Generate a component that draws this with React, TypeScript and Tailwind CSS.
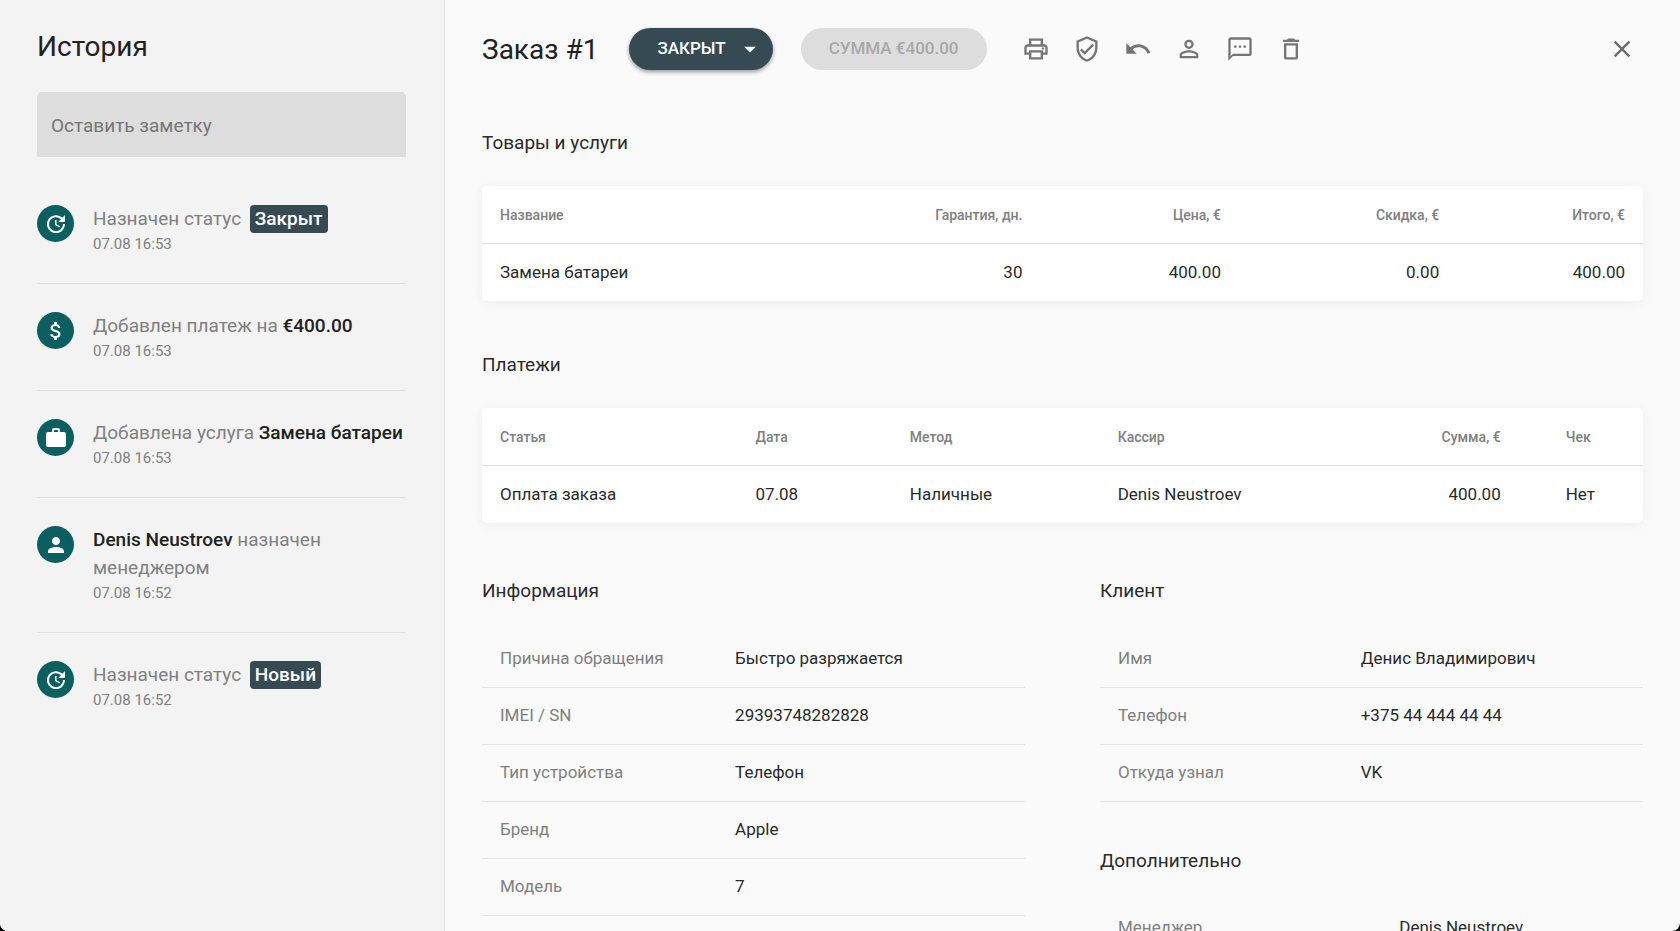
import type { ReactNode } from "react";
import type { IconType } from "react-icons";
import {
  MdArrowDropDown,
  MdAttachMoney,
  MdClose,
  MdDeleteOutline,
  MdOutlinePrint,
  MdOutlineTextsms,
  MdOutlineVerifiedUser,
  MdPerson,
  MdPersonOutline,
  MdUndo,
  MdUpdate,
  MdWork,
} from "react-icons/md";

const actions: { label: string; icon: IconType }[] = [
  { label: "Печать", icon: MdOutlinePrint },
  { label: "Гарантия", icon: MdOutlineVerifiedUser },
  { label: "Вернуть", icon: MdUndo },
  { label: "Менеджер", icon: MdPersonOutline },
  { label: "Сообщение", icon: MdOutlineTextsms },
  { label: "Удалить", icon: MdDeleteOutline },
];

const info = [
  ["Причина обращения", "Быстро разряжается"],
  ["IMEI / SN", "29393748282828"],
  ["Тип устройства", "Телефон"],
  ["Бренд", "Apple"],
  ["Модель", "7"],
];

const client = [
  ["Имя", "Денис Владимирович"],
  ["Телефон", "+375 44 444 44 44"],
  ["Откуда узнал", "VK"],
];

const extra = [["Менеджер", "Denis Neustroev"]];

function Badge({ children }: { children: ReactNode }) {
  return (
    <span className="ml-1 inline-block rounded bg-[#364a54] px-[5px] font-medium text-white">
      {children}
    </span>
  );
}

function Strong({ children }: { children: ReactNode }) {
  return <span className="font-medium text-[#212121]">{children}</span>;
}

function HistoryItem({ icon: Icon, time, children }: { icon: IconType; time: string; children: ReactNode }) {
  return (
    <li className="flex gap-[19px] border-b border-[#e2e2e2] py-7 last:border-b-0">
      <span className="flex size-[37px] shrink-0 items-center justify-center rounded-full bg-[#0b5f61] text-white">
        <Icon size={24} />
      </span>
      <div className="min-w-0 flex-1">
        <p className="text-[19px] leading-7 text-[#808080]">{children}</p>
        <time className="block text-[15px] leading-[22px] text-[#808080]">{time}</time>
      </div>
    </li>
  );
}

function SectionTitle({ children }: { children: ReactNode }) {
  return <h2 className="text-[19px] leading-[30px] text-[#2a2a2a]">{children}</h2>;
}

function Card({ children }: { children: ReactNode }) {
  return (
    <div className="mt-7 overflow-hidden rounded-[5px] bg-white shadow-[0_2px_12px_rgba(0,0,0,0.06)]">
      {children}
    </div>
  );
}

function Th({ className = "", children }: { className?: string; children: ReactNode }) {
  return (
    <th className={`h-[58px] border-b border-[#e0e0e0] px-[18px] text-sm font-medium text-[#808080] ${className}`}>
      {children}
    </th>
  );
}

function Td({ className = "", children }: { className?: string; children: ReactNode }) {
  return <td className={`h-[57px] px-[18px] text-[17px] text-[#2a2a2a] ${className}`}>{children}</td>;
}

function Details({ rows, labelWidth }: { rows: string[][]; labelWidth: string }) {
  return (
    <table className="mt-6 w-full table-fixed border-collapse text-left text-[17px]">
      <tbody>
        {rows.map(([label, value]) => (
          <tr key={label} className="h-[57px] border-b border-[#e2e2e2]">
            <th scope="row" className={`px-[18px] font-normal text-[#808080] ${labelWidth}`}>
              {label}
            </th>
            <td className="px-[18px] text-[#2a2a2a]">{value}</td>
          </tr>
        ))}
      </tbody>
    </table>
  );
}

export default function App() {
  return (
    <div className="h-screen bg-black font-['Roboto',sans-serif]">
      <div className="flex h-full overflow-hidden rounded-b-lg bg-[#fafafa]">
        {/* History */}
        <aside className="w-[445px] shrink-0 overflow-y-auto border-r border-[#e6e6e6] bg-[#f3f3f3] pt-[29px] pr-[38px] pl-[37px] [scrollbar-width:none]">
          <h2 className="text-[28px] leading-9 text-[#212121]">История</h2>
          <input
            type="text"
            aria-label="Оставить заметку"
            placeholder="Оставить заметку"
            className="mt-[27px] block h-[65px] w-full rounded-t-[5px] bg-[#dddddd] px-3.5 pt-0.5 text-[19px] text-[#212121] outline-none placeholder:text-[#757575]"
          />
          <ul className="mt-5">
            <HistoryItem icon={MdUpdate} time="07.08 16:53">
              Назначен статус <Badge>Закрыт</Badge>
            </HistoryItem>
            <HistoryItem icon={MdAttachMoney} time="07.08 16:53">
              Добавлен платеж на <Strong>€400.00</Strong>
            </HistoryItem>
            <HistoryItem icon={MdWork} time="07.08 16:53">
              Добавлена услуга <Strong>Замена батареи</Strong>
            </HistoryItem>
            <HistoryItem icon={MdPerson} time="07.08 16:52">
              <Strong>Denis Neustroev</Strong> назначен менеджером
            </HistoryItem>
            <HistoryItem icon={MdUpdate} time="07.08 16:52">
              Назначен статус <Badge>Новый</Badge>
            </HistoryItem>
          </ul>
        </aside>

        {/* Order */}
        <main className="min-w-0 flex-1 overflow-y-auto px-[37px] pt-7 [scrollbar-width:none]">
          <header className="flex h-[42px] items-center">
            <h1 className="pt-0.5 text-[28px] text-[#212121]">Заказ #1</h1>
            <button
              type="button"
              className="ml-[31px] flex h-[42px] items-center gap-2.5 rounded-full bg-[#364a54] pr-[9px] pl-7 text-[17px] font-medium text-white shadow-[0_2px_4px_rgba(0,0,0,0.4)]"
            >
              ЗАКРЫТ
              <MdArrowDropDown size={28} />
            </button>
            <button
              type="button"
              disabled
              className="ml-7 h-[42px] rounded-full bg-[#dddddd] px-7 text-[17px] font-medium text-[#a8a8a8]"
            >
              СУММА €400.00
            </button>
            <div className="ml-6 flex text-[#757575]">
              {actions.map(({ label, icon: Icon }) => (
                <button key={label} type="button" aria-label={label} className="flex h-[42px] w-[51px] items-center justify-center">
                  <Icon size={28} />
                </button>
              ))}
            </div>
            <button type="button" aria-label="Закрыть" className="ml-auto flex h-[42px] w-[42px] items-center justify-center text-[#6b6b6b]">
              <MdClose size={28} />
            </button>
          </header>

          <section className="mt-[58px]">
            <SectionTitle>Товары и услуги</SectionTitle>
            <Card>
              <table className="w-full table-fixed border-separate border-spacing-0">
                <thead>
                  <tr>
                    <Th className="w-[29.3%] text-left">Название</Th>
                    <Th className="w-[18.8%] text-right">Гарантия, дн.</Th>
                    <Th className="w-[17.1%] text-right">Цена, €</Th>
                    <Th className="w-[18.8%] text-right">Скидка, €</Th>
                    <Th className="w-[16%] text-right">Итого, €</Th>
                  </tr>
                </thead>
                <tbody>
                  <tr>
                    <Td>Замена батареи</Td>
                    <Td className="text-right">30</Td>
                    <Td className="text-right">400.00</Td>
                    <Td className="text-right">0.00</Td>
                    <Td className="text-right">400.00</Td>
                  </tr>
                </tbody>
              </table>
            </Card>
          </section>

          <section className="mt-[49px]">
            <SectionTitle>Платежи</SectionTitle>
            <Card>
              <table className="w-full table-fixed border-separate border-spacing-0">
                <thead>
                  <tr>
                    <Th className="w-[22%] text-left">Статья</Th>
                    <Th className="w-[13.3%] text-left">Дата</Th>
                    <Th className="w-[17.9%] text-left">Метод</Th>
                    <Th className="w-[18.1%] text-left">Кассир</Th>
                    <Th className="w-[18%] text-right">Сумма, €</Th>
                    <Th className="w-[10.7%] pl-[47px]! text-left">Чек</Th>
                  </tr>
                </thead>
                <tbody>
                  <tr>
                    <Td>Оплата заказа</Td>
                    <Td>07.08</Td>
                    <Td>Наличные</Td>
                    <Td>Denis Neustroev</Td>
                    <Td className="text-right">400.00</Td>
                    <Td className="pl-[47px]!">Нет</Td>
                  </tr>
                </tbody>
              </table>
            </Card>
          </section>

          <div className="mt-[53px] grid grid-cols-2 gap-x-[75px]">
            <section>
              <SectionTitle>Информация</SectionTitle>
              <Details rows={info} labelWidth="w-[43.3%]" />
            </section>
            <div>
              <section>
                <SectionTitle>Клиент</SectionTitle>
                <Details rows={client} labelWidth="w-[44.7%]" />
              </section>
              <section className="mt-11">
                <SectionTitle>Дополнительно</SectionTitle>
                <Details rows={extra} labelWidth="w-[51.8%]" />
              </section>
            </div>
          </div>
        </main>
      </div>
    </div>
  );
}
